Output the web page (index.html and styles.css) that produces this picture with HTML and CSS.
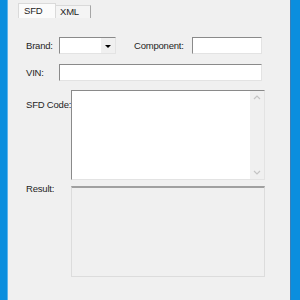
FILE: index.html
```html
<!DOCTYPE html>
<html>
<head>
    <title>SFD Tool</title>
    <link rel="stylesheet" href="styles.css">
</head>
<body>
    <div class="frame-left"></div>
    <div class="window">
        <div class="tabs">
            <div class="tab active">SFD</div>
            <div class="tab">XML</div>
        </div>

        <div class="form">
            <div class="row row-top">
                <span class="label label-short">Brand:</span>
                <div class="combo">
                    <div class="combo-text"></div>
                    <div class="combo-btn"><span class="arrow"></span></div>
                </div>
                <span class="label label-comp">Component:</span>
                <div class="field field-comp"></div>
            </div>

            <div class="row row-vin">
                <span class="label label-short">VIN:</span>
                <div class="field field-vin"></div>
            </div>

            <div class="row row-code">
                <span class="label label-long label-code">SFD Code:</span>
                <div class="memo">
                    <div class="memo-text"></div>
                    <div class="scrollbar">
                        <svg width="14" height="10" viewBox="0 0 14 10"><path d="M4 6 L7 3 L10 6" fill="none" stroke="#c4c4c4" stroke-width="1.2"/></svg>
                        <svg width="14" height="10" viewBox="0 0 14 10"><path d="M4 4 L7 7 L10 4" fill="none" stroke="#c4c4c4" stroke-width="1.2"/></svg>
                    </div>
                </div>
            </div>

            <div class="row row-result">
                <span class="label label-long label-result">Result:</span>
                <div class="result"></div>
            </div>
        </div>
    </div>
    <div class="frame-right"></div>
</body>
</html>
```

FILE: styles.css
```css
body {
    display: flex;
    margin: 0;
    height: 300px;
    font-family: "Liberation Sans", Arial, sans-serif;
    font-size: 9.5px;
    letter-spacing: -0.2px;
    color: #1e1e1e;
    background-color: #f0f0f0;
}

.frame-left {
    width: 7px;
    background-color: #0b8ede;
    border-right: 1px solid #5fb4ea;
}

.frame-right {
    width: 9px;
    background-color: #0b8ede;
    border-left: 1px solid #3a7fb8;
}

.window {
    flex: 1;
    background-color: #f0f0f0;
}

/* tab strip */
.tabs {
    display: flex;
    align-items: flex-end;
    height: 18px;
    padding-left: 10px;
}

.tab {
    box-sizing: border-box;
    width: 35px;
    height: 13px;
    padding-left: 4px;
    line-height: 12px;
    border: 1px solid #d9d9d9;
    border-bottom: none;
    background-color: #f4f4f4;
}

.tab.active {
    width: 38px;
    height: 15px;
    line-height: 14px;
    padding-left: 5px;
    background-color: #fbfbfb;
    border-color: #dadada;
}

.tab + .tab {
    border-left: none;
    border-right-color: #a6a6a6;
}

/* form */
.form {
    padding: 19px 0 0 18px;
}

.row {
    display: flex;
}

.label {
    line-height: 17px;
    white-space: nowrap;
}

.label-short {
    width: 33px;
}

.label-long {
    width: 45px;
}

.label-comp {
    width: 58px;
    margin-left: 18px;
}

.label-code {
    padding-top: 6px;
}

.label-result {
    margin-top: -6px;
}

.field,
.combo {
    height: 15px;
    background-color: #fff;
    border: 1px solid;
    border-color: #8a8a8a #e3e3e3 #e3e3e3 #8a8a8a;
}

.combo {
    display: flex;
    width: 55px;
}

.combo-text {
    flex: 1;
}

.combo-btn {
    width: 14px;
    display: flex;
    align-items: center;
    justify-content: center;
    background-color: #f0f0f0;
    border-left: 1px solid #fff;
}

.arrow {
    width: 0;
    height: 0;
    border-left: 3px solid transparent;
    border-right: 3px solid transparent;
    border-top: 3px solid #000;
    margin-top: 1px;
}

.field-comp {
    width: 68px;
}

.row-vin {
    margin-top: 10px;
}

.field-vin {
    width: 201px;
}

.row-code {
    margin-top: 9px;
}

.memo {
    display: flex;
    width: 192px;
    height: 88px;
    background-color: #fff;
    border: 1px solid;
    border-color: #8a8a8a #e3e3e3 #e3e3e3 #8a8a8a;
}

.memo-text {
    flex: 1;
}

.scrollbar {
    width: 14px;
    display: flex;
    flex-direction: column;
    justify-content: space-between;
    padding: 2px 0;
    background-color: #f0f0f0;
}

.row-result {
    margin-top: 6px;
}

.result {
    width: 192px;
    height: 88px;
    border: 1px solid #dcdcdc;
    border-top: 2px solid #a0a0a0;
    background-color: #f0f0f0;
}
```
